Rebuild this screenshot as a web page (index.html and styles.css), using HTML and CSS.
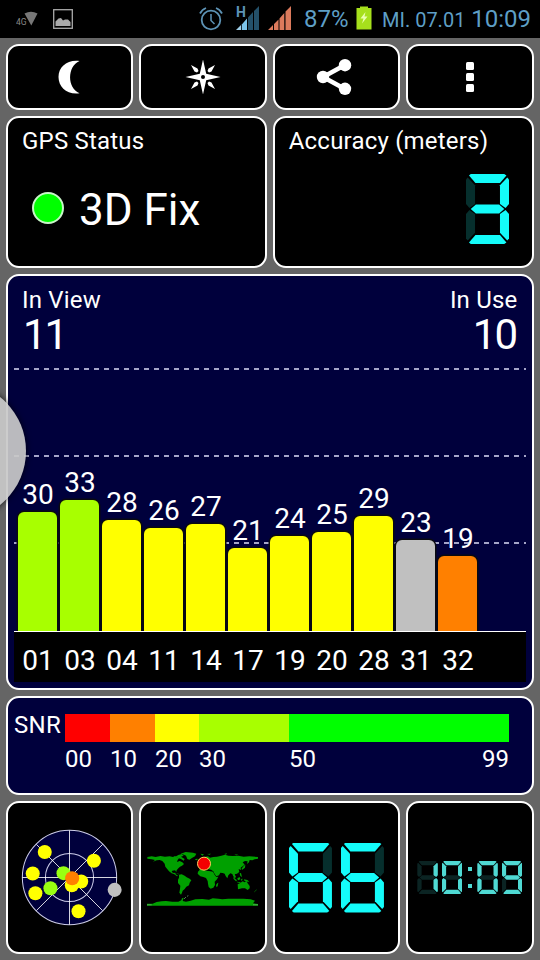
FILE: index.html
```
<!DOCTYPE html>
<html lang="en">
<head>
    <meta charset="UTF-8">
    <meta name="viewport" content="width=device-width, initial-scale=1.0">
    <title>GPS Status</title>
    <link rel="stylesheet" href="styles.css">
</head>
<body>
    <!-- Status bar -->
    <header class="status-bar">
        <svg class="icon-4g" width="22" height="16" viewBox="0 0 22 16">
            <path d="M8.500 2.500Q15 -1 21.500 2.500L15.300 14.500Z" fill="#777"/>
            <text x="0" y="14" class="net-label">4G</text>
        </svg>
        <svg class="icon-picture" width="20" height="20" viewBox="0 0 20 20">
            <rect x=".7" y=".7" width="18.600" height="18.600" fill="none" stroke="#aaa" stroke-width="1.300"/>
            <path d="M2.500 17V12.500L5.500 9.500L8 9L10 11.500L12 10.500H15L17.500 13V17Z" fill="#aaa"/>
        </svg>
        <svg class="icon-alarm" width="24" height="24" viewBox="0 0 24 24" fill="none" stroke="#5d93b5">
            <circle cx="12" cy="13" r="9.300" stroke-width="1.800"/>
            <path d="M12 7V13.500L15.500 17" stroke-width="1.500"/>
            <path d="M1 6.500Q3 2.500 7 1M17 1Q21 2.500 23 6.500" stroke-width="1.800"/>
        </svg>
        <svg class="icon-signal" width="24" height="26" viewBox="0 0 24 26">
            <path d="M0 25L5 20V25Z" fill="#9fd0ea"/>
            <path d="M5.800 19.500L11 13.500V25H5.800Z" fill="#7cc4ea"/>
            <path d="M12 12.500L17 7V25H12ZM18 6L23 1V25H18Z" fill="#24516a"/>
            <text x="0" y="12" class="signal-label">H</text>
        </svg>
        <svg class="icon-signal" width="24" height="26" viewBox="0 0 24 26">
            <path d="M0 25L5 20V25ZM6 19L10.500 14.500V25H6ZM11.500 13.500L16.300 8V25H11.500ZM17.500 6.500L23 1V25H17.500Z" fill="#dc7a5c"/>
        </svg>
        <span class="battery-text">87%</span>
        <svg class="icon-battery" width="16" height="24" viewBox="0 0 16 24">
            <path d="M4 2V0.500H12V2H15.500V23.500H.5V2Z" fill="#a6e01c"/>
            <path d="M9.500 6L4.500 12.500H7.500L6 17.500L11.500 10.500H8.500Z" fill="#eaffb0"/>
        </svg>
        <span class="date">MI. 07.01</span>
        <span class="time">10:09</span>
    </header>

    <main class="dashboard">
        <!-- Toolbar buttons -->
        <button class="card tool-btn" aria-label="Night mode">
            <svg class="icon-moon" width="24" height="36" viewBox="0 0 24 36">
                <path d="M22.500 2C10 .5 1.500 8 1.500 18S10 36 22.500 34.300C10 29 10 7.500 22.500 2Z" fill="#fff"/>
            </svg>
        </button>
        <button class="card tool-btn" aria-label="Compass">
            <svg width="36" height="36" viewBox="0 0 36 36" fill="#fff">
                <path d="M18 .5L21.200 14.800L35.500 18L21.200 21.200L18 35.500L14.800 21.200L.5 18L14.800 14.800Z"/>
                <path d="M30 6L26.500 12.500L24 13.500L22.500 12L23.500 9.500ZM30 30L26.500 23.500L24 22.500L22.500 24L23.500 26.500ZM6 30L9.500 23.500L12 22.500L13.500 24L12.500 26.500ZM6 6L9.500 12.500L12 13.500L13.500 12L12.500 9.500Z"/>
                <circle cx="18" cy="18" r="2" fill="#000"/>
            </svg>
        </button>
        <button class="card tool-btn" aria-label="Share">
            <svg class="icon-share" width="36" height="36" viewBox="0 0 36 36" fill="#fff">
                <path d="M29 6L7 18L29 30" fill="none" stroke="#fff" stroke-width="4.500"/>
                <circle cx="7" cy="18" r="6.200"/>
                <circle cx="29" cy="6.200" r="6.200"/>
                <circle cx="29" cy="29.800" r="6.200"/>
            </svg>
        </button>
        <button class="card tool-btn" aria-label="Menu">
            <svg width="8" height="30" viewBox="0 0 8 30" fill="#fff">
                <rect width="8" height="8" rx="1.500"/>
                <rect y="11" width="8" height="8" rx="1.500"/>
                <rect y="22" width="8" height="8" rx="1.500"/>
            </svg>
        </button>

        <!-- Fix status and accuracy -->
        <section class="card half">
            <h2>GPS Status</h2>
            <div class="fix">
                <span class="fix-led"></span>
                <span>3D Fix</span>
            </div>
        </section>
        <section class="card half">
            <h2>Accuracy (meters)</h2>
            <div class="led accuracy" role="img" aria-label="3">
                <span class="digit d3"><i></i><i></i><i></i><i></i><i></i><i></i><i></i></span>
            </div>
        </section>

        <!-- Satellite signal chart -->
        <section class="card signal">
            <div class="counts">
                <div class="in-view"><h2>In View</h2><p>11</p></div>
                <div class="in-use"><h2>In Use</h2><p>10</p></div>
            </div>
            <div class="bars">
                <div class="sat"><span>30</span><div class="bar lime" style="height:119px"></div></div>
                <div class="sat"><span>33</span><div class="bar lime" style="height:131px"></div></div>
                <div class="sat"><span>28</span><div class="bar yellow" style="height:111px"></div></div>
                <div class="sat"><span>26</span><div class="bar yellow" style="height:103px"></div></div>
                <div class="sat"><span>27</span><div class="bar yellow" style="height:107px"></div></div>
                <div class="sat"><span>21</span><div class="bar yellow" style="height:83px"></div></div>
                <div class="sat"><span>24</span><div class="bar yellow" style="height:95px"></div></div>
                <div class="sat"><span>25</span><div class="bar yellow" style="height:99px"></div></div>
                <div class="sat"><span>29</span><div class="bar yellow" style="height:115px"></div></div>
                <div class="sat"><span>23</span><div class="bar silver" style="height:91px"></div></div>
                <div class="sat"><span>19</span><div class="bar orange" style="height:75px"></div></div>
            </div>
            <div class="sat-ids">
                <span>01</span><span>03</span><span>04</span><span>11</span><span>14</span><span>17</span><span>19</span><span>20</span><span>28</span><span>31</span><span>32</span>
            </div>
        </section>

        <!-- SNR scale -->
        <section class="card snr">
            <span class="snr-title">SNR</span>
            <div class="scale">
                <div class="red"></div>
                <div class="orange"></div>
                <div class="yellow"></div>
                <div class="lime"></div>
                <div class="green"></div>
                <span>00</span>
                <span>10</span>
                <span>20</span>
                <span>30</span>
                <span class="ends"><b>50</b><b>99</b></span>
            </div>
        </section>

        <!-- Bottom tiles -->
        <section class="card tile">
            <svg width="107" height="107" viewBox="48 87 320 320">
                <circle cx="208" cy="247" r="141" fill="#00003c"/>
                <g fill="none" stroke="#ccccea" stroke-width="3">
                    <circle cx="208" cy="247" r="141"/>
                    <circle cx="208" cy="247" r="72"/>
                </g>
                <path d="M208 106V388M67 247H349M109 148L307 346M307 148L109 346" stroke="#fff" stroke-width="2.500"/>
                <g fill="#ff0">
                    <circle cx="134" cy="171" r="21"/>
                    <circle cx="98" cy="235" r="21"/>
                    <circle cx="106" cy="294" r="21"/>
                    <circle cx="281" cy="197" r="21"/>
                    <circle cx="235" cy="348" r="21"/>
                    <circle cx="215" cy="270" r="21"/>
                    <circle cx="243" cy="259" r="21"/>
                </g>
                <circle cx="190" cy="234" r="21" fill="#9f1"/>
                <circle cx="151" cy="279" r="21" fill="#9f1"/>
                <circle cx="216" cy="249" r="21" fill="#ff8000"/>
                <circle cx="343" cy="284" r="21" fill="#c0c0c0"/>
            </svg>
        </section>
        <section class="card tile">
            <svg width="112" height="56" viewBox="36 163 336 168">
                <g fill="#00a000">
                    <!-- Americas -->
                    <path d="M37 184L50 182L62 184L76 181L90 183L104 182L114 184L120 181L126 185L132 188L128 193L126 199L134 196L142 200L147 205L141 210L135 213L130 218L125 224L124 229L120 224L112 225L110 229L116 232L121 231L122 236L129 240L126 242L118 236L110 233L102 227L96 219L91 213L89 204L82 196L74 193L65 194L54 198L60 193L50 191L37 189Z"/>
                    <path d="M130 178L140 175L146 180L138 183L149 190L146 195L138 190L129 187L121 183Z"/>
                    <path d="M137 174L152 169L174 171L184 174L180 182L172 186L163 192L157 190L153 180L147 177Z"/>
                    <path d="M132 237L140 236L149 240L155 245L164 249L169 254L164 261L162 269L154 273L149 280L143 285L141 291L138 297L133 291L135 280L136 270L129 262L129 252L132 246Z"/>
                    <!-- Europe and Asia -->
                    <path d="M202 190L211 183L219 182L225 186L235 184L246 183L259 180L270 177L280 180L293 181L310 180L326 183L343 182L369 184L369 189L359 191L352 194L344 193L342 200L336 205L338 197L330 196L323 200L329 207L323 212L317 216L318 223L311 220L313 229L306 234L299 236L303 244L299 248L294 240L292 235L286 233L280 239L277 248L272 241L269 234L263 232L256 231L252 239L244 242L239 235L235 227L228 222L221 221L215 222L208 219L201 223L193 222L194 216L200 213L196 208L204 205L210 203L208 197L202 199Z"/>
                    <path d="M193 200L197 196L199 204L193 207ZM181 190L188 189L187 194L181 193ZM326 211L331 207L330 216L322 222L319 220Z"/>
                    <!-- Africa -->
                    <path d="M194 223L206 221L212 225L222 226L234 228L239 238L244 244L250 243L246 251L239 258L240 268L235 276L227 279L221 274L219 264L218 256L213 247L205 244L196 242L188 234L189 228Z"/>
                    <path d="M247 263L250 261L248 272L244 274L243 268Z"/>
                    <!-- Oceania -->
                    <path d="M308 266L316 262L323 257L329 260L334 256L339 264L344 271L344 278L338 283L330 278L321 278L309 281Z"/>
                    <path d="M294 244L306 254L303 257L296 250ZM307 248L314 244L316 251L309 254ZM305 258L318 260L315 262L306 260ZM318 250L323 249L320 257ZM327 251L337 253L343 258L335 258L328 255ZM314 233L318 232L321 244L316 241ZM360 286L366 280L364 284L356 291ZM196 174L207 176L202 180ZM216 175L228 174L224 177ZM268 175L276 173L273 177ZM298 176L310 177L304 179ZM122 233L133 235L130 236Z"/>
                    <!-- Antarctica -->
                    <path d="M36 324L53 324L65 319L80 317L93 316L112 318L130 318L139 314L141 308L146 306L143 316L153 318L167 315L181 311L202 310L222 312L233 308L250 309L262 311L280 309L300 309L325 309L347 311L360 315L354 323L369 325L369 330L36 330Z"/>
                </g>
                <path d="M36 327.500H50M354 327.500H369M147 310L153 304M156 302L160 300" stroke="#78b878" stroke-width="2"/>
                <circle cx="207" cy="204" r="19.500" fill="#f40000" stroke="#ffd060" stroke-width="3"/>
            </svg>
        </section>
        <section class="card tile">
            <div class="led" role="img" aria-label="66">
                <span class="digit d6"><i></i><i></i><i></i><i></i><i></i><i></i><i></i></span>
                <span class="digit d6"><i></i><i></i><i></i><i></i><i></i><i></i><i></i></span>
            </div>
        </section>
        <section class="card tile">
            <div class="led clock" role="img" aria-label="10:09">
                <span class="digit d1"><i></i><i></i><i></i><i></i><i></i><i></i><i></i></span>
                <span class="digit d0"><i></i><i></i><i></i><i></i><i></i><i></i><i></i></span>
                <span class="colon"></span>
                <span class="digit d0"><i></i><i></i><i></i><i></i><i></i><i></i><i></i></span>
                <span class="digit d9"><i></i><i></i><i></i><i></i><i></i><i></i><i></i></span>
            </div>
        </section>
    </main>

    <!-- Side drawer handle -->
    <div class="drawer-handle"></div>
</body>
</html>
```
FILE: styles.css
```
* {
    box-sizing: border-box;
}
body {
    margin: 0;
    width: 540px;
    height: 960px;
    overflow: hidden;
    position: relative;
    background-color: #656565;
    color: #fff;
    font-family: Roboto, "Noto Sans", sans-serif;
}
h2, p {
    margin: 0;
    font-weight: normal;
}
svg {
    display: block;
    flex: none;
}

/* Status bar */
.status-bar {
    height: 38px;
    background-color: #000;
    color: #5e9fc6;
    display: flex;
    align-items: center;
    padding: 0 9px 0 16px;
    white-space: nowrap;
}
.net-label {
    font-size: 8.5px;
    fill: #888;
}
.signal-label {
    font-size: 14px;
    font-weight: bold;
    fill: #5d93b5;
}
.icon-4g {
    margin-right: 15px;
}
.icon-alarm {
    margin-left: 126px;
    margin-right: 13px;
}
.icon-signal {
    margin-right: 8px;
    margin-bottom: 3px;
}
.battery-text {
    font-size: 24px;
    width: 52px;
    margin-left: 4px;
}
.icon-battery {
    margin-bottom: 2px;
}
.date {
    font-size: 20px;
    margin-left: 10px;
    padding-top: 2px;
}
.time {
    font-size: 24px;
    margin-left: auto;
}

/* Card grid */
.dashboard {
    display: grid;
    grid-template-columns: repeat(4, 1fr);
    grid-template-rows: 66px 152px 416px 99px 153px;
    gap: 6px;
    padding: 6px 6.5px 6px 6px;
}
.card {
    background-color: #000;
    border: 2px solid #fff;
    border-radius: 13px;
    color: #fff;
    min-width: 0;
}
.card h2 {
    font-size: 24px;
    line-height: 28px;
    letter-spacing: 0.2px;
}
.tool-btn, .tile {
    display: flex;
    align-items: center;
    justify-content: center;
    padding: 0;
}
.icon-moon {
    margin-right: 1px;
}
.icon-share {
    margin-right: 4px;
}
.half {
    grid-column: span 2;
    padding: 9px 14px;
}

/* Fix status */
.fix {
    display: flex;
    align-items: center;
    gap: 15px;
    margin: 29px 0 0 10px;
    font-size: 44px;
    line-height: 52px;
}
.fix-led {
    width: 32px;
    height: 32px;
    border-radius: 50%;
    background-color: #0f0;
    border: 2px solid #c8f5c8;
    margin-bottom: 4px;
}

/* Seven segment digits */
.led {
    display: flex;
    gap: 9px;
    --on: #14fcfa;
    --off: #062f2d;
}
.accuracy {
    justify-content: flex-end;
    margin: 19px 8.5px 0 0;
}
.digit {
    display: grid;
    width: 43px;
    height: 70px;
}
.digit i {
    grid-area: 1 / 1;
    background-color: var(--on);
}
.digit i:nth-child(1) { clip-path: polygon(7% 2%, 11% 0, 89% 0, 94% 2%, 79% 13%, 22% 13%); }
.digit i:nth-child(2) { clip-path: polygon(96% 5%, 100% 8%, 100% 43%, 92% 48.5%, 79% 43%, 79% 16%); }
.digit i:nth-child(3) { clip-path: polygon(92% 51.5%, 100% 57%, 100% 92%, 96% 95%, 79% 84%, 79% 57%); }
.digit i:nth-child(4) { clip-path: polygon(22% 87%, 79% 87%, 94% 98%, 89% 100%, 11% 100%, 7% 98%); }
.digit i:nth-child(5) { clip-path: polygon(8% 51.5%, 21% 57%, 21% 84%, 4% 95%, 0 92%, 0 57%); }
.digit i:nth-child(6) { clip-path: polygon(4% 5%, 21% 16%, 21% 43%, 8% 48.5%, 0 43%, 0 8%); }
.digit i:nth-child(7) { clip-path: polygon(11% 50%, 23% 43.5%, 77% 43.5%, 89% 50%, 77% 56.5%, 23% 56.5%); }
.d0 i:nth-child(7),
.d1 i:nth-child(1), .d1 i:nth-child(n+4),
.d3 i:nth-child(5), .d3 i:nth-child(6),
.d6 i:nth-child(2),
.d9 i:nth-child(5) {
    background-color: var(--off);
}
.clock {
    gap: 4px;
    --on: #4fd9d3;
    --off: #0b2423;
}
.clock .digit {
    width: 20.5px;
    height: 33px;
}
.colon {
    width: 4px;
    height: 21px;
    margin: 6px 1.5px 0;
    border: solid #4fd9d3;
    border-width: 4px 0;
}

/* Satellite chart */
.signal {
    grid-column: span 4;
    background-color: #00003c;
    padding: 0 6px;
    display: flex;
    flex-direction: column;
}
.counts {
    display: flex;
    justify-content: space-between;
    height: 92px;
    padding: 10px 8px 0;
}
.counts p {
    font-size: 42px;
    line-height: 41px;
    letter-spacing: -2px;
}
.in-view p {
    padding-left: 1px;
}
.in-use {
    text-align: right;
}
.in-use p {
    padding-right: 1.5px;
}
.bars {
    height: 264px;
    display: flex;
    align-items: flex-end;
    gap: 3px;
    padding-left: 4px;
    border-bottom: 1px solid #fff;
    background-image: repeating-linear-gradient(90deg, #a5a5c8 0 5px, transparent 5px 10px), repeating-linear-gradient(90deg, #a5a5c8 0 5px, transparent 5px 10px), repeating-linear-gradient(90deg, #a5a5c8 0 5px, transparent 5px 10px);
    background-size: 100% 2px;
    background-position: 0 0, 0 87px, 0 174px;
    background-repeat: no-repeat;
}
.sat {
    width: 39px;
    text-align: center;
    font-size: 28px;
    line-height: 35px;
    padding-left: 1px;
}
.bar {
    margin-left: -1px;
    border-radius: 6px 6px 0 0;
    box-shadow: 0 0 0 1.5px #0a0a10;
    clip-path: inset(-2px -2px 0);
}
.red { background-color: #f00; }
.orange { background-color: #ff8000; }
.yellow { background-color: #ff0; }
.lime { background-color: #a8ff00; }
.green { background-color: #0f0; }
.silver { background-color: #c0c0c0; }
.sat-ids {
    height: 50px;
    background-color: #000;
    display: flex;
    gap: 3px;
    padding-left: 4px;
    font-size: 28px;
    line-height: 57px;
}
.sat-ids span {
    width: 39px;
    padding-left: 1px;
    text-align: center;
}

/* SNR scale */
.snr {
    grid-column: span 4;
    background-color: #00003c;
    display: flex;
    padding: 16px 22.5px 0 6px;
    font-size: 24px;
    line-height: 28px;
}
.snr-title {
    width: 51px;
    line-height: 22px;
    letter-spacing: 0.3px;
}
.scale {
    flex: 1;
    display: grid;
    grid-template-columns: 45px 45px 44px 90px 1fr;
    grid-template-rows: 28px 34px;
    line-height: 34px;
}
.ends {
    display: flex;
    justify-content: space-between;
}
.ends b {
    font-weight: normal;
}

.drawer-handle {
    position: absolute;
    left: -112px;
    top: 382px;
    width: 138px;
    height: 138px;
    border-radius: 50%;
    background-color: rgba(200, 200, 200, 0.93);
    box-shadow: 0 0 6px rgba(0, 0, 0, 0.8);
}
```
